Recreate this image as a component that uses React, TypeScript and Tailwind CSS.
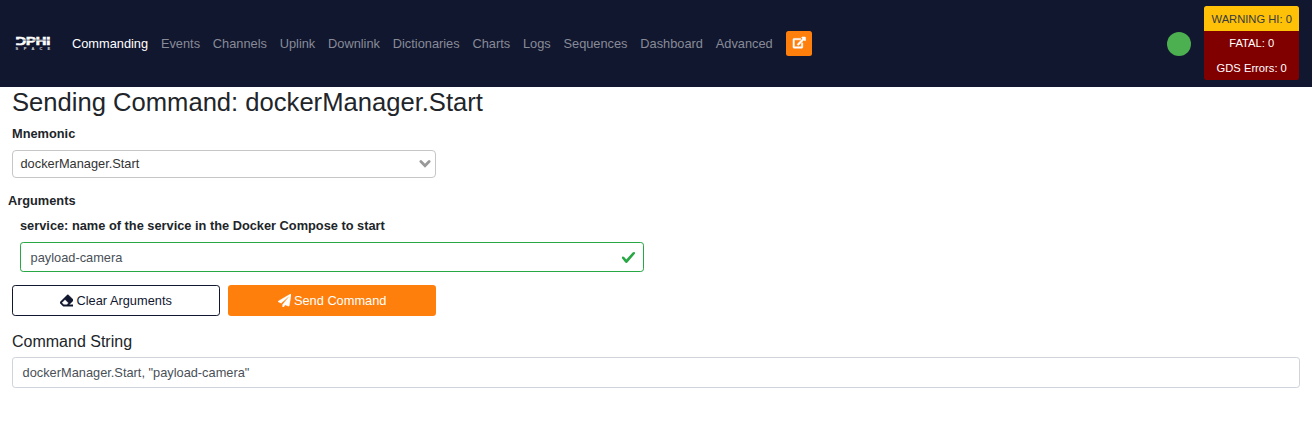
import { FaEraser, FaPaperPlane } from "react-icons/fa";

const links = [
  "Commanding",
  "Events",
  "Channels",
  "Uplink",
  "Downlink",
  "Dictionaries",
  "Charts",
  "Logs",
  "Sequences",
  "Dashboard",
  "Advanced",
];

function Logo() {
  return (
    <svg width="36" height="16" viewBox="0 -2 36 16" className="mb-px shrink-0 overflow-visible" fill="#fff" fontFamily="Liberation Sans, sans-serif" fontWeight="700">
      <text x="0.4" y="8.2" fontSize="10" textLength="35" lengthAdjust="spacingAndGlyphs" stroke="#fff" strokeWidth="0.6">
        DPHI
      </text>
      <path d="M0 3.1H36" stroke="#11172f" strokeWidth="0.6" />
      <path d="M0 2.8H5.5V6.2H0Z" fill="#11172f" />
      <text x="0.5 8.8 16.4 24.5 32.6" y="12.7" fontSize="4" opacity="0.85">
        SPACE
      </text>
    </svg>
  );
}

function ExternalLinkIcon() {
  return (
    <svg width="12.6" height="11.2" viewBox="0 0 576 512" fill="currentColor" stroke="currentColor" strokeWidth="24" className="mb-[1.5px] overflow-visible">
      <path d="M576 24v127.984c0 21.461-25.96 31.98-40.971 16.971l-35.707-35.709-243.523 243.523c-9.373 9.373-24.568 9.373-33.941 0l-22.627-22.627c-9.373-9.373-9.373-24.569 0-33.941L442.756 76.676l-35.703-35.705C391.982 25.9 402.656 0 424.024 0H552c13.255 0 24 10.745 24 24zM407.029 270.794l-16 16A23.999 23.999 0 0 0 384 303.765V448H64V128h264a24.003 24.003 0 0 0 16.97-7.029l16-16C376.089 89.851 365.381 64 344 64H48C21.49 64 0 85.49 0 112v352c0 26.51 21.49 48 48 48h352c26.51 0 48-21.49 48-48V287.764c0-21.382-25.852-32.09-40.971-16.97z" />
    </svg>
  );
}

function Navbar() {
  return (
    <nav className="flex h-[86.8px] items-center bg-[#11172f] pr-[12.8px] pl-[15px]">
      <Logo />
      <ul className="ml-[21px] flex items-center gap-[12.8px]">
        {links.map((link, i) => (
          <li key={link} className={i === 0 ? "text-white" : "text-[#888b97]"}>
            {link}
          </li>
        ))}
      </ul>
      <button className="ml-[13.2px] flex h-[25.2px] w-[26px] items-center justify-center rounded-[2.5px] bg-[#ff7f0c] text-white">
        <ExternalLinkIcon />
      </button>
      <div className="mt-px ml-auto size-6 rounded-full bg-[#4caf50]" />
      <div className="ml-[13px] flex w-[95px] flex-col overflow-hidden rounded-[2.5px] text-center text-[11.2px] leading-[16.8px] text-white">
        <div className="h-[25px] bg-[#ffc107] pt-[5px] text-[#343a40]">WARNING HI: 0</div>
        <div className="h-[24.5px] bg-[#800000] pt-[4px]">FATAL: 0</div>
        <div className="h-[24.5px] bg-[#800000] pt-[4px]">GDS Errors: 0</div>
      </div>
    </nav>
  );
}

export default function App() {
  return (
    <div className="min-h-screen bg-white font-['Liberation_Sans',Arial,sans-serif] text-[12.8px] leading-[19.2px] text-[#212529]">
      <Navbar />
      <main className="px-3">
        <h2 className="mb-[6.4px] text-[25.6px] leading-[30.7px]">Sending Command: dockerManager.Start</h2>
        <label className="block font-bold">Mnemonic</label>
        <div className="mt-[6.6px] flex h-[28.3px] w-[424px] items-center justify-between rounded-[4px] border border-[#c6c6c6] pr-[4.5px] pl-[7.5px] text-[#333]">
          <span>dockerManager.Start</span>
          <svg width="12" height="8" viewBox="0 0 12 8" fill="none" stroke="#999" strokeWidth="2.8" strokeLinecap="round" strokeLinejoin="miter">
            <path d="M1.9 1.6L6 5.7L10.1 1.6" />
          </svg>
        </div>
        <div className="-ml-1 mt-[12.8px] font-bold">Arguments</div>
        <div className="ml-2 mt-[6.2px]">
          <label className="block font-bold">service: name of the service in the Docker Compose to start</label>
          <div className="mt-[6.4px] flex h-[30.4px] w-[624px] items-center justify-between rounded-[3.2px] border border-[#28a745] pt-[1.2px] pr-[7.5px] pl-[9.6px] text-[#495057]">
            <span>payload-camera</span>
            <svg width="15" height="15" viewBox="0 0 8 8" fill="#28a745" className="mb-px">
              <path d="M2.3 6.73L.6 4.53c-.4-1.04.46-1.4 1.1-.8l1.1 1.4 3.4-3.8c.6-.63 1.6-.27 1.2.7l-4 4.6c-.43.5-.8.4-1.1.1z" />
            </svg>
          </div>
        </div>
        <div className="mt-[12.8px] flex gap-2">
          <button className="flex h-[30.8px] w-52 items-center justify-center gap-[3.2px] rounded-[3.2px] border border-[#11172f] text-[#11172f]">
            <FaEraser className="size-[13.2px] stroke-current stroke-[14]" />
            Clear Arguments
          </button>
          <button className="flex h-[30.8px] w-52 items-center justify-center gap-[3.2px] rounded-[3.2px] bg-[#ff7f0c] text-white">
            <FaPaperPlane className="size-[13.2px] stroke-current stroke-[10]" />
            Send Command
          </button>
        </div>
        <h5 className="mt-[16px] mb-[6.4px] text-[16px] leading-[19.2px]">Command String</h5>
        <div className="flex h-[30.8px] items-center rounded-[3.2px] border border-[#ced4da] px-[9.6px] text-[#495057]">
          dockerManager.Start, "payload-camera"
        </div>
      </main>
    </div>
  );
}
